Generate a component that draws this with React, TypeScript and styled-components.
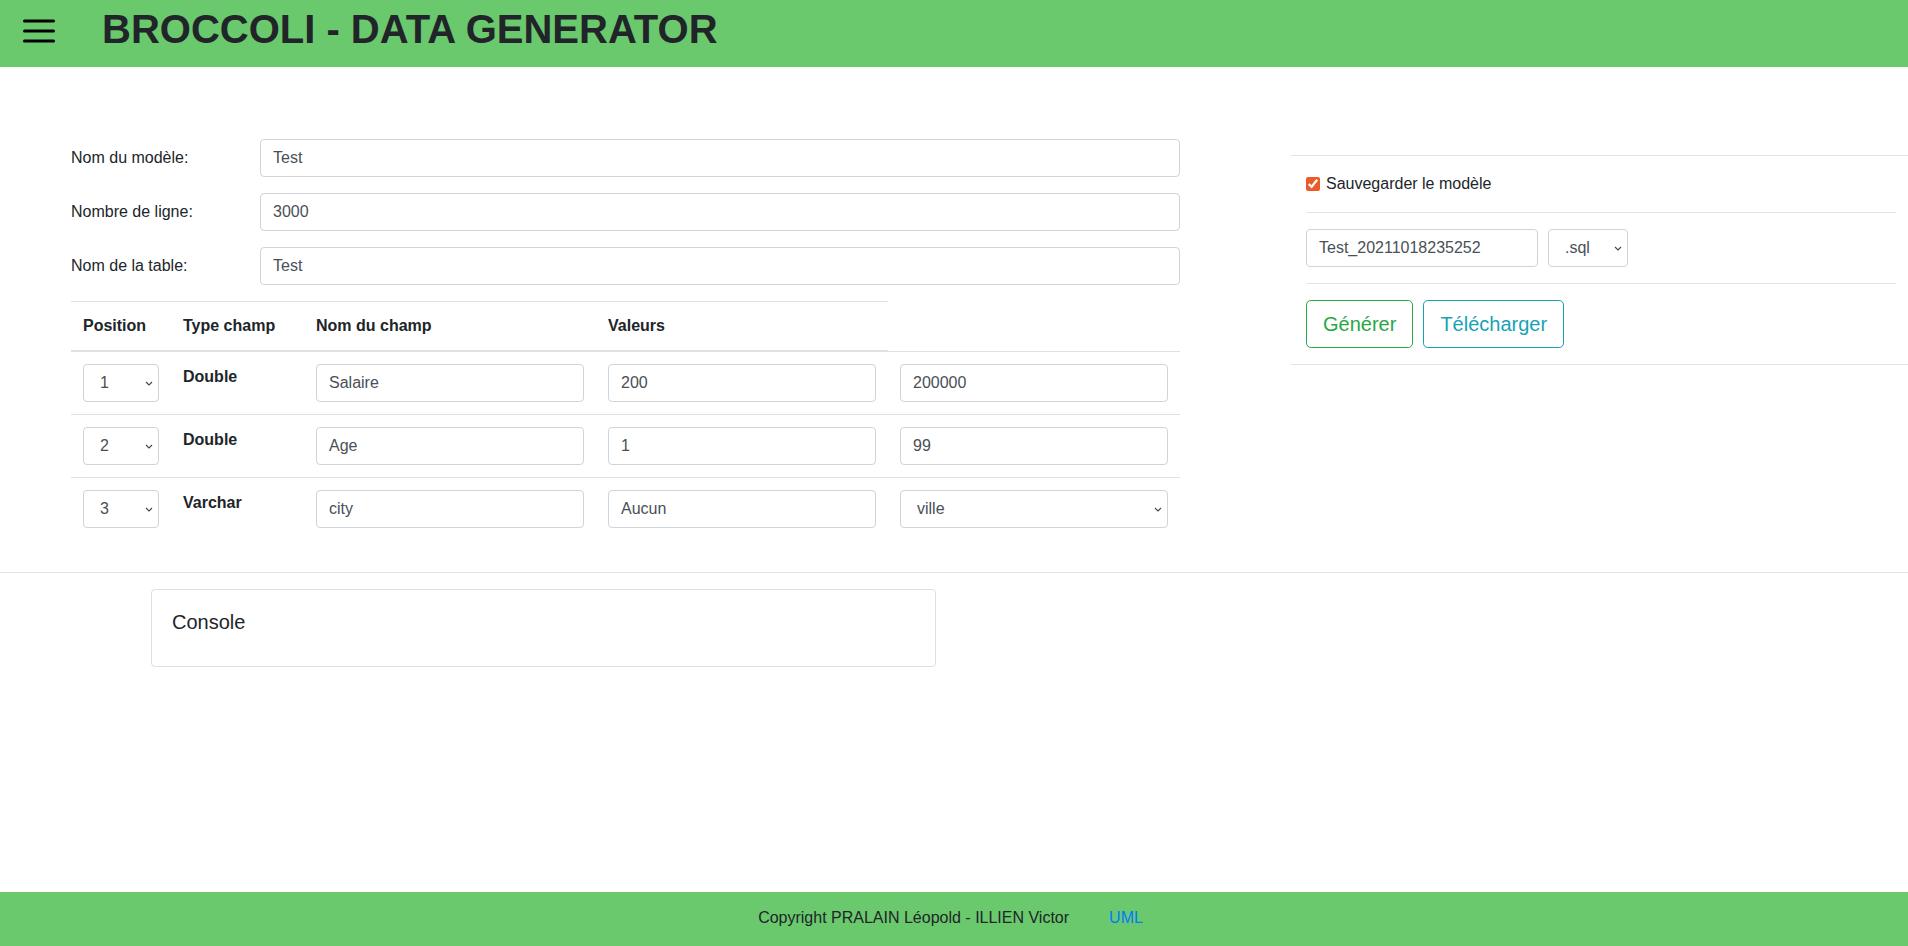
import React from "react";
import styled, { createGlobalStyle, css } from "styled-components";

const GlobalStyle = createGlobalStyle`
  html, body { margin: 0; padding: 0; }
  body {
    font-family: "Liberation Sans", Arial, sans-serif;
    font-size: 16px;
    line-height: 1.5;
    color: #212529;
    background: #fff;
  }
  *, *::before, *::after { box-sizing: border-box; }
`;

const GREEN = "#6ac96d";

const Page = styled.div`
  min-height: 100vh;
  display: flex;
  flex-direction: column;
`;

const Header = styled.header`
  height: 67px;
  flex: 0 0 67px;
  background: ${GREEN};
  display: flex;
  align-items: flex-start;
  padding-left: 23px;
`;

const MenuButton = styled.button`
  border: 0;
  background: none;
  padding: 0;
  margin-top: 19px;
  width: 32px;
  height: 24px;
  display: block;
  cursor: pointer;
`;

const Title = styled.h1`
  margin: 0 0 0 47px;
  padding-top: 5px;
  font-size: 40px;
  line-height: 1.2;
  font-weight: 700;
  color: #212529;
`;

const Main = styled.main`
  flex: 1;
  display: flex;
  flex-direction: column;
`;

const Workspace = styled.div`
  display: flex;
  align-items: flex-start;
  padding-top: 72px;
`;

const LeftCol = styled.section`
  width: 1133px;
  flex: 0 0 1133px;
  margin-left: 59px;
  padding: 0 12px;
`;

const RightCol = styled.aside`
  margin-left: 99px;
  flex: 1;
  padding-top: 16px;
`;

const Rule = styled.hr`
  margin: 0;
  border: 0;
  border-top: 1px solid rgba(0, 0, 0, 0.1);
  height: 0;
`;

const RightInner = styled.div`
  display: flex;
  flex-direction: column;
  gap: 16px;
  padding: 16px 12px 16px 15px;
`;

const CheckLabel = styled.label`
  display: flex;
  align-items: center;
  gap: 6px;
  height: 24px;
  color: #212529;
`;

const CheckBox = styled.input`
  width: 14px;
  height: 14px;
  margin: 0;
  accent-color: #ec5a29;
`;

const FileRow = styled.div`
  display: flex;
  gap: 10px;
  align-items: center;
`;

const controlCss = css`
  display: block;
  height: 38px;
  padding: 6px 12px;
  font-family: "Liberation Sans", Arial, sans-serif;
  font-size: 16px;
  line-height: 1.5;
  color: #495057;
  background: #fff;
  border: 1px solid #ced4da;
  border-radius: 4px;
  outline: none;
`;

const TextField = styled.input<{ $w?: number }>`
  ${controlCss}
  width: ${(p) => (p.$w ? `${p.$w}px` : "100%")};
`;

const SelectWrap = styled.div<{ $w?: number }>`
  position: relative;
  width: ${(p) => (p.$w ? `${p.$w}px` : "100%")};
`;

const NativeSelect = styled.select`
  ${controlCss}
  width: 100%;
  appearance: none;
  -webkit-appearance: none;
  padding-left: 16px;
  padding-right: 24px;
`;

const Chevron = styled.svg`
  position: absolute;
  right: 6px;
  top: 50%;
  margin-top: -2px;
  width: 8px;
  height: 5px;
  pointer-events: none;
`;

const Select: React.FC<{ w?: number; value: string; options: string[] }> = ({ w, value, options }) => (
  <SelectWrap $w={w}>
    <NativeSelect defaultValue={value}>
      {options.map((o) => (
        <option key={o} value={o}>
          {o}
        </option>
      ))}
    </NativeSelect>
    <Chevron viewBox="0 0 8 5">
      <path d="M1 1 L4 4 L7 1" fill="none" stroke="#444" strokeWidth="1.1" />
    </Chevron>
  </SelectWrap>
);

const ButtonRow = styled.div`
  display: flex;
  gap: 10px;
`;

const OutlineButton = styled.button<{ $color: string }>`
  font-family: "Liberation Sans", Arial, sans-serif;
  font-size: 20px;
  line-height: 1.5;
  padding: 8px 16px;
  border-radius: 4.8px;
  background: #fff;
  border: 1px solid ${(p) => p.$color};
  color: ${(p) => p.$color};
  cursor: pointer;
`;

const FormGrid = styled.div`
  display: grid;
  grid-template-columns: 189px 1fr;
  row-gap: 16px;
`;

const FieldLabel = styled.label`
  padding-top: 7px;
  line-height: 24px;
  height: 38px;
`;

const Table = styled.table`
  margin-top: 16px;
  width: 1109px;
  border-collapse: collapse;
  table-layout: fixed;
`;

const HeadCell = styled.th`
  text-align: left;
  font-weight: 700;
  padding: 12px;
  line-height: 24px;
  border-top: 1px solid #dee2e6;
  border-bottom: 2px solid #dee2e6;
  vertical-align: bottom;
`;

const Cell = styled.td`
  padding: 12px;
  border-top: 1px solid #dee2e6;
  vertical-align: top;
`;

const TypeText = styled.span`
  display: block;
  font-weight: 700;
  line-height: 24px;
  padding-top: 1px;
`;

const PageRule = styled.hr`
  margin: 32px 0 16px;
  border: 0;
  border-top: 1px solid rgba(0, 0, 0, 0.1);
  height: 0;
`;

const ConsoleCard = styled.div`
  margin-left: 151px;
  width: 785px;
  border: 1px solid rgba(0, 0, 0, 0.125);
  border-radius: 4px;
  padding: 20px;
`;

const ConsoleTitle = styled.h5`
  margin: 0 0 12px;
  font-size: 20px;
  line-height: 1.2;
  font-weight: 400;
  color: #212529;
`;

const Footer = styled.footer`
  height: 54px;
  flex: 0 0 54px;
  background: ${GREEN};
  display: flex;
  align-items: center;
  justify-content: center;
  gap: 40px;
  padding: 0 7px 2px 0;
  color: #212529;
`;

const FooterLink = styled.a`
  color: #007bff;
  text-decoration: none;
`;

type Row = { pos: string; type: string; name: string; v1: string; v2: string; v2Select?: boolean };

const rows: Row[] = [
  { pos: "1", type: "Double", name: "Salaire", v1: "200", v2: "200000" },
  { pos: "2", type: "Double", name: "Age", v1: "1", v2: "99" },
  { pos: "3", type: "Varchar", name: "city", v1: "Aucun", v2: "ville", v2Select: true },
];

export default function App() {
  return (
    <Page>
      <GlobalStyle />
      <Header>
        <MenuButton aria-label="menu">
          <svg width="32" height="24" viewBox="0 0 32 24">
            <g stroke="#000" strokeWidth="3" strokeLinecap="round">
              <line x1="1.5" y1="2" x2="30.5" y2="2" />
              <line x1="1.5" y1="12" x2="30.5" y2="12" />
              <line x1="1.5" y1="22" x2="30.5" y2="22" />
            </g>
          </svg>
        </MenuButton>
        <Title>BROCCOLI - DATA GENERATOR</Title>
      </Header>
      <Main>
        <Workspace>
          <LeftCol>
            <FormGrid>
              <FieldLabel>Nom du modèle:</FieldLabel>
              <TextField defaultValue="Test" />
              <FieldLabel>Nombre de ligne:</FieldLabel>
              <TextField defaultValue="3000" />
              <FieldLabel>Nom de la table:</FieldLabel>
              <TextField defaultValue="Test" />
            </FormGrid>
            <Table>
              <colgroup>
                <col style={{ width: 100 }} />
                <col style={{ width: 133 }} />
                <col style={{ width: 292 }} />
                <col style={{ width: 292 }} />
                <col style={{ width: 292 }} />
              </colgroup>
              <thead>
                <tr>
                  <HeadCell>Position</HeadCell>
                  <HeadCell>Type champ</HeadCell>
                  <HeadCell>Nom du champ</HeadCell>
                  <HeadCell>Valeurs</HeadCell>
                </tr>
              </thead>
              <tbody>
                {rows.map((r) => (
                  <tr key={r.pos}>
                    <Cell>
                      <Select w={76} value={r.pos} options={["1", "2", "3"]} />
                    </Cell>
                    <Cell>
                      <TypeText>{r.type}</TypeText>
                    </Cell>
                    <Cell>
                      <TextField defaultValue={r.name} />
                    </Cell>
                    <Cell>
                      <TextField defaultValue={r.v1} />
                    </Cell>
                    <Cell>
                      {r.v2Select ? (
                        <Select value={r.v2} options={["ville", "pays", "nom", "prénom"]} />
                      ) : (
                        <TextField defaultValue={r.v2} />
                      )}
                    </Cell>
                  </tr>
                ))}
              </tbody>
            </Table>
          </LeftCol>
          <RightCol>
            <Rule />
            <RightInner>
              <CheckLabel>
                <CheckBox type="checkbox" defaultChecked />
                Sauvegarder le modèle
              </CheckLabel>
              <Rule />
              <FileRow>
                <TextField $w={232} defaultValue="Test_20211018235252" />
                <Select w={80} value=".sql" options={[".sql", ".csv", ".json"]} />
              </FileRow>
              <Rule />
              <ButtonRow>
                <OutlineButton $color="#28a745">Générer</OutlineButton>
                <OutlineButton $color="#17a2b8">Télécharger</OutlineButton>
              </ButtonRow>
            </RightInner>
            <Rule />
          </RightCol>
        </Workspace>
        <PageRule />
        <ConsoleCard>
          <ConsoleTitle>Console</ConsoleTitle>
        </ConsoleCard>
      </Main>
      <Footer>
        <span>Copyright PRALAIN Léopold - ILLIEN Victor</span>
        <FooterLink href="#">UML</FooterLink>
      </Footer>
    </Page>
  );
}
